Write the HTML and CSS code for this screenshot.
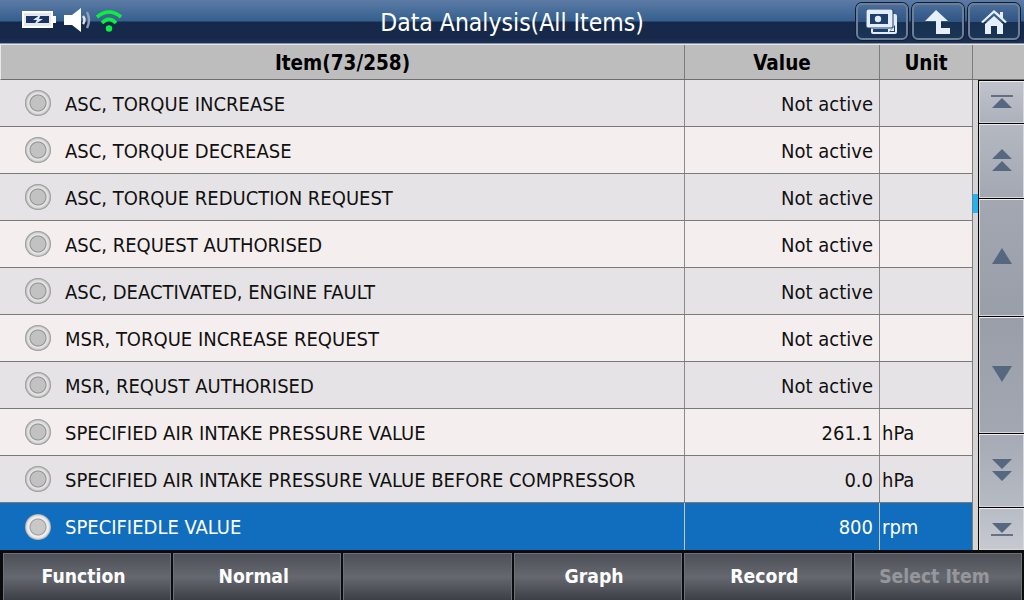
FILE: index.html
```html
<!DOCTYPE html>
<html lang="en">
<head>
    <meta charset="UTF-8">
    <title>Data Analysis(All Items)</title>
    <link rel="stylesheet" href="styles.css">
</head>
<body>
    <header class="topbar">
        <div class="status">
            <svg width="36" height="18" viewBox="0 0 36 18">
                <rect x="1" y="1" width="29" height="15" fill="#e4e8ee" stroke="#fff" stroke-width="2"/>
                <rect x="4" y="5" width="23" height="7" fill="#1b3560"/>
                <rect x="31" y="5" width="3" height="7" fill="#fff"/>
                <path d="M19 3 L11 9 H15 L12 14 L21 8 H17 Z" fill="#dfe8f4"/>
            </svg>
        </div>
        <svg class="sound" width="28" height="24" viewBox="0 0 28 24">
            <path d="M0 7 H8 L17 0 V24 L8 17 H0 Z" fill="#fff"/>
            <path d="M19 8 Q22 12 19 16" fill="none" stroke="#dfe4ea" stroke-width="2.5"/>
            <path d="M23 4 Q27 12 23 20" fill="none" stroke="#8fa0b5" stroke-width="2.5"/>
        </svg>
        <svg class="wifi" width="28" height="24" viewBox="0 0 28 24">
            <path d="M2 9 Q14 -1 26 9" fill="none" stroke="#0af03c" stroke-width="3.6"/>
            <path d="M7 15 Q14 8 21 15" fill="none" stroke="#0af03c" stroke-width="3.6"/>
            <circle cx="14" cy="20.5" r="3.2" fill="#0af03c"/>
        </svg>
        <h1>Data Analysis(All Items)</h1>
        <div class="top-btns">
            <button class="top-btn">
                <svg width="32" height="26" viewBox="0 0 32 26">
                    <rect x="5" y="5" width="26" height="20" rx="2" fill="#e3edf8"/>
                    <rect x="7" y="20" width="15" height="3" fill="#1f3f6c"/>
                    <path d="M23 23 L29 23 V16 Z" fill="#1f3f6c"/>
                    <path d="M24 22 L28 22 V18 Z" fill="#e3edf8"/>
                    <rect x="0" y="0" width="27" height="19" rx="2" fill="#e3edf8" stroke="#1f3f6c"/>
                    <rect x="4" y="5" width="18" height="10" fill="#1f3f6c"/>
                    <circle cx="12" cy="10" r="3.2" fill="#e3edf8"/>
                </svg>
            </button>
            <button class="top-btn">
                <svg width="28" height="26" viewBox="0 0 28 26">
                    <path d="M12 1 L24 12 H17 V19 H26 V25 H12 V12 H1 Z" fill="#e6f0fa"/>
                </svg>
            </button>
            <button class="top-btn">
                <svg width="26" height="26" viewBox="0 0 26 26">
                    <path d="M13 1 L19 6 V3 H22 V9 L26 13 L24 14 L13 4 L2 14 L0 13 Z" fill="#e6f0fa"/>
                    <path d="M13 7 L22 15 V25 H16 V17 H10 V25 H4 V15 Z" fill="#e6f0fa"/>
                </svg>
            </button>
        </div>
    </header>

    <div class="thead">
        <div class="th th-item">Item(73/258)</div>
        <div class="th th-value">Value</div>
        <div class="th th-unit">Unit</div>
        <div class="th th-side"></div>
    </div>

    <main class="content">
        <div class="rows">
            <div class="row"><div class="col-item cell"><span class="radio"></span>ASC, TORQUE INCREASE</div><div class="col-value cell">Not active</div><div class="col-unit cell"></div></div>
            <div class="row"><div class="col-item cell"><span class="radio"></span>ASC, TORQUE DECREASE</div><div class="col-value cell">Not active</div><div class="col-unit cell"></div></div>
            <div class="row"><div class="col-item cell"><span class="radio"></span>ASC, TORQUE REDUCTION REQUEST</div><div class="col-value cell">Not active</div><div class="col-unit cell"></div></div>
            <div class="row"><div class="col-item cell"><span class="radio"></span>ASC, REQUEST AUTHORISED</div><div class="col-value cell">Not active</div><div class="col-unit cell"></div></div>
            <div class="row"><div class="col-item cell"><span class="radio"></span>ASC, DEACTIVATED, ENGINE FAULT</div><div class="col-value cell">Not active</div><div class="col-unit cell"></div></div>
            <div class="row"><div class="col-item cell"><span class="radio"></span>MSR, TORQUE INCREASE REQUEST</div><div class="col-value cell">Not active</div><div class="col-unit cell"></div></div>
            <div class="row"><div class="col-item cell"><span class="radio"></span>MSR, REQUST AUTHORISED</div><div class="col-value cell">Not active</div><div class="col-unit cell"></div></div>
            <div class="row"><div class="col-item cell"><span class="radio"></span>SPECIFIED AIR INTAKE PRESSURE VALUE</div><div class="col-value cell">261.1</div><div class="col-unit cell">hPa</div></div>
            <div class="row"><div class="col-item cell"><span class="radio"></span>SPECIFIED AIR INTAKE PRESSURE VALUE BEFORE COMPRESSOR</div><div class="col-value cell">0.0</div><div class="col-unit cell">hPa</div></div>
            <div class="row selected"><div class="col-item cell"><span class="radio"></span>SPECIFIEDLE VALUE</div><div class="col-value cell">800</div><div class="col-unit cell">rpm</div></div>
        </div>

        <div class="track"><span class="thumb"></span></div>

        <div class="pager">
            <button class="page-btn pb-first">
                <svg width="24" height="14" viewBox="0 0 24 14"><path d="M1 1 H23" stroke="#47566d" stroke-width="1.5"/><path d="M12 3 L22 13 H2 Z" fill="#56687f"/></svg>
            </button>
            <button class="page-btn pb-prev">
                <svg width="20" height="24" viewBox="0 0 20 24"><path d="M10 1 L20 11 H0 Z M10 13 L20 23 H0 Z" fill="#56687f"/></svg>
            </button>
            <button class="page-btn pb-up">
                <svg width="20" height="16" viewBox="0 0 20 16"><path d="M10 0 L20 16 H0 Z" fill="#56687f"/></svg>
            </button>
            <button class="page-btn pb-down">
                <svg width="20" height="16" viewBox="0 0 20 16"><path d="M10 16 L20 0 H0 Z" fill="#56687f"/></svg>
            </button>
            <button class="page-btn pb-next">
                <svg width="20" height="24" viewBox="0 0 20 24"><path d="M10 11 L20 1 H0 Z M10 23 L20 13 H0 Z" fill="#56687f"/></svg>
            </button>
            <button class="page-btn pb-last">
                <svg width="24" height="14" viewBox="0 0 24 14"><path d="M12 11 L22 1 H2 Z" fill="#56687f"/><path d="M1 13 H23" stroke="#47566d" stroke-width="1.5"/></svg>
            </button>
        </div>
    </main>

    <footer class="toolbar">
        <button class="tool">Function</button>
        <button class="tool">Normal</button>
        <button class="tool"></button>
        <button class="tool">Graph</button>
        <button class="tool">Record</button>
        <button class="tool disabled">Select Item</button>
    </footer>
</body>
</html>
```

FILE: styles.css
```css
* {
    box-sizing: border-box;
}

html, body {
    margin: 0;
    padding: 0;
}

body {
    width: 1024px;
    height: 600px;
    overflow: hidden;
    display: flex;
    flex-direction: column;
    font-family: "DejaVu Sans", "Liberation Sans", sans-serif;
    font-stretch: condensed;
    background: #16294a;
}

button {
    font: inherit;
    padding: 0;
}

/* top bar */
.topbar {
    height: 44px;
    flex: none;
    display: flex;
    align-items: flex-start;
    position: relative;
    background: linear-gradient(#5c7ba5 0, #34608f 21px, #16294b 22px, #16294b 38px, #1c3356 44px);
    border-bottom: 1px solid #8a96a8;
}

.status {
    margin: 11px 0 0 22px;
    width: 42px;
}

.sound {
    margin-top: 8px;
}

.wifi {
    margin: 8px 0 0 3px;
}

.topbar h1 {
    position: absolute;
    left: 0;
    right: 0;
    top: 8px;
    margin: 0;
    text-align: center;
    font-size: 24.5px;
    line-height: 30px;
    font-weight: normal;
    color: #fff;
}

.top-btns {
    margin: 3px 4px 0 auto;
    display: flex;
    gap: 4px;
}

.top-btn {
    width: 52px;
    height: 37px;
    display: flex;
    align-items: center;
    justify-content: center;
    border: 2px solid #6c7f96;
    border-radius: 6px;
    background: linear-gradient(#4a6d99 0, #2f5583 50%, #17304f 51%, #1b3557 100%);
    box-shadow: 0 0 0 1px #0f1f38;
}

/* table */
.thead {
    height: 36px;
    flex: none;
    display: flex;
    background: #bdbdbd;
    border-top: 1px solid #e8e8e8;
    border-left: 1px solid #e8e8e8;
    border-bottom: 1px solid #6e6e6e;
}

.th {
    display: flex;
    align-items: center;
    justify-content: center;
    font-size: 20.5px;
    font-weight: bold;
    color: #000;
    border-right: 1px solid #7c7c7c;
    padding-top: 2px;
}

.th-item {
    width: 684px;
}

.th-value {
    width: 195px;
}

.th-unit {
    width: 93px;
}

.th-side {
    width: 51px;
    border-right: 0;
}

.content {
    flex: 1;
    display: flex;
    min-height: 0;
    background: #d6d6d6;
}

.rows {
    width: 973px;
    flex: none;
    display: flex;
    flex-direction: column;
}

.row {
    height: 47px;
    flex: none;
    display: flex;
    background: #f5eeee;
    border-bottom: 1px solid #7a7a7a;
    border-right: 1px solid #7c7c7c;
    font-size: 20px;
    color: #111;
}

.row:nth-child(odd) {
    background: #e6e3e6;
}

.row.selected {
    background: #116dbd;
    color: #fff;
    border-bottom: 0;
}

.cell {
    display: flex;
    align-items: center;
    border-right: 1px solid #8a8a8a;
    white-space: nowrap;
    padding-top: 1px;
}

.selected .cell {
    border-right-color: #c4c4c4;
}

.col-item {
    width: 685px;
    padding-left: 25px;
}

.col-value {
    width: 195px;
    justify-content: flex-end;
    padding-right: 6px;
}

.col-unit {
    width: 92px;
    border-right: 0;
    padding-left: 2px;
}

.radio {
    width: 26px;
    height: 26px;
    flex: none;
    margin-right: 14px;
    margin-top: -1px;
    border-radius: 50%;
    background: radial-gradient(circle, #c2c2c2 0, #c2c2c2 7px, #8f8f8f 8px, #e8e8e8 9px, #d6d6d6 11px, #8c8c8c 13px);
}

.selected .radio {
    background: radial-gradient(circle, #c8c8c8 0, #c8c8c8 7px, #9a9a9a 8px, #f2f2f2 9px, #e6e6e6 11px, #a8a8a8 13px);
}

/* scroll side */
.track {
    width: 5px;
    flex: none;
    position: relative;
    background: #d4d4d4;
}

.thumb {
    position: absolute;
    left: 0;
    top: 114px;
    width: 5px;
    height: 19px;
    background: #1eb6f2;
}

.pager {
    flex: 1;
    display: flex;
    flex-direction: column;
    gap: 1px;
    background: #000;
    padding: 1px 0 0 1px;
}

.page-btn {
    flex: none;
    display: flex;
    align-items: center;
    justify-content: center;
    border: 1px solid #d8d9dd;
    border-top-color: #eceef0;
}

.pb-first {
    height: 42px;
    background: linear-gradient(#c0c3cb, #adb1bb);
}

.pb-prev {
    height: 74px;
    background: linear-gradient(#b4b8c1, #a4a8b2);
    padding-bottom: 2px;
}

.pb-up {
    height: 117px;
    background: linear-gradient(#a3a7b1, #9a9ea9);
    padding-bottom: 3px;
}

.pb-down {
    height: 116px;
    background: linear-gradient(#9a9ea9, #a3a7b1);
    padding-bottom: 3px;
}

.pb-next {
    height: 73px;
    background: linear-gradient(#a6aab4, #b6bac3);
    padding-bottom: 2px;
}

.pb-last {
    height: 42px;
    background: linear-gradient(#b8bcc5, #c6c9d0);
}

/* bottom toolbar */
.toolbar {
    height: 50px;
    flex: none;
    display: flex;
    gap: 2px;
    padding: 3px 2px 0 3px;
    background: #0b0b0d;
}

.tool {
    flex: 1;
    border: 1px solid #6d7078;
    border-bottom: 0;
    padding: 0 7px 2px 0;
    background: linear-gradient(#4e5058 0, #666870 50%, #3d3f46 100%);
    color: #fff;
    font-size: 19.2px;
    font-weight: bold;
}

.tool.disabled {
    color: #95979c;
}
```
